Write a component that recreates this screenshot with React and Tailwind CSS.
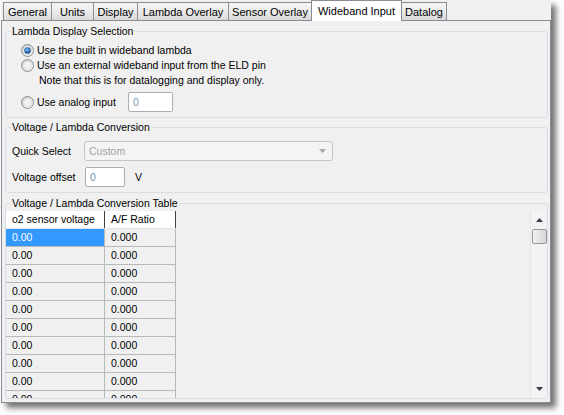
import React from 'react';

// Wideband Input tab of the settings dialog (Win7 look)

const tabs = [
  { label: 'General', w: 'w-[49px]' },
  { label: 'Units', w: 'w-[43px]' },
  { label: 'Display', w: 'w-[45px]' },
  { label: 'Lambda Overlay', w: 'w-[92px]' },
  { label: 'Sensor Overlay', w: 'w-[84px]' },
  { label: 'Wideband Input', w: 'w-[91px]', active: true },
  { label: 'Datalog', w: 'w-[46px]' },
];

const rows = Array.from({ length: 10 }, (_, i) => i);

const Radio = ({ checked }) => (
  <svg width="13" height="13" viewBox="0 0 13 13" className="shrink-0">
    <defs>
      <linearGradient id="rbg" x1="0" y1="0" x2="1" y2="1">
        <stop offset="0" stopColor="#c9c9c9" />
        <stop offset="1" stopColor="#fbfbfb" />
      </linearGradient>
      <radialGradient id="rdot" cx="0.45" cy="0.4" r="0.6">
        <stop offset="0" stopColor="#8cc3f5" />
        <stop offset="0.6" stopColor="#2f74c4" />
        <stop offset="1" stopColor="#123f7a" />
      </radialGradient>
    </defs>
    <circle cx="6.5" cy="6.5" r="6" fill="url(#rbg)" stroke="#8e8f8f" />
    <circle cx="6.5" cy="6.5" r="4" fill="#f2f2f2" stroke="#dadada" strokeWidth="0.8" />
    {checked && <circle cx="6.5" cy="6.5" r="3.2" fill="url(#rdot)" />}
  </svg>
);

const Arrow = ({ down, color = '#3c3c48' }) => (
  <svg width="7" height="4" viewBox="0 0 7 4">
    <polygon points={down ? '0,0 7,0 3.5,4' : '3.5,0 7,4 0,4'} fill={color} />
  </svg>
);

const TextBox = ({ w, value }) => (
  <div className={`${w} h-[20px] bg-white border border-[#abadb3] rounded-[2px] pl-[4px] flex items-center text-[#7891ae]`}>
    {value}
  </div>
);

export default function App() {
  return (
    <div className="w-[564px] h-[415px] bg-white overflow-hidden font-['Liberation_Sans',Arial,sans-serif] text-[10.5px] leading-[13px] text-black">
      <div className="ml-[1px] w-[550px] h-[403px] bg-[#f0f0f0] shadow-[5px_5px_6px_rgba(0,0,0,0.55)] flex flex-col">
        {/* tab strip */}
        <div className="flex items-end h-[20px] pl-[2px]">
          {tabs.map((t, i) =>
            t.active ? (
              <div
                key={t.label}
                className={`${t.w} ${i ? '-ml-px' : ''} relative z-10 -mb-px h-[21px] bg-white border border-b-0 border-[#898c95] flex items-center justify-center text-[11px]`}
              >
                {t.label}
              </div>
            ) : (
              <div
                key={t.label}
                className={`${t.w} ${i ? '-ml-px' : ''} h-[18px] bg-linear-to-b from-[#f4f4f4] via-[#ebebeb] to-[#d8d8d8] border border-b-0 border-[#898c95] flex items-center justify-center pt-px text-[11px]`}
              >
                {t.label}
              </div>
            )
          )}
        </div>

        {/* tab page */}
        <div className="h-[383px] border border-[#898c95] flex flex-col">
          <fieldset className="mt-[4px] ml-[3px] mr-[2px] h-[93px] border border-[#d5dfe5] rounded-[3px]">
            <legend className="ml-[5px] px-[1px] leading-[13px]">Lambda Display Selection</legend>
            <div className="mt-[5px] pl-[15px] flex items-center gap-[3px] h-[15px]">
              <Radio checked />
              <span>Use the built in wideband lambda</span>
            </div>
            <div className="pl-[15px] flex items-center gap-[3px] h-[15px]">
              <Radio />
              <span>Use an external wideband input from the ELD pin</span>
            </div>
            <div className="pl-[33px] h-[15px] leading-[15px]">Note that this is for datalogging and display only.</div>
            <div className="mt-[4px] pl-[15px] flex items-center h-[20px]">
              <Radio />
              <span className="ml-[3px] w-[91px]">Use analog input</span>
              <TextBox w="w-[45px]" value="0" />
            </div>
          </fieldset>

          <fieldset className="mt-[3px] ml-[3px] mr-[2px] h-[72px] border border-[#d5dfe5] rounded-[3px]">
            <legend className="ml-[5px] px-[1px] leading-[13px]">Voltage / Lambda Conversion</legend>
            <div className="mt-[7px] pl-[6px] flex items-center h-[20px]">
              <span className="w-[72px]">Quick Select</span>
              <div className="w-[249px] h-[20px] border border-[#c5c5c5] rounded-[3px] bg-[#f4f4f4] flex items-center justify-between pl-[4px] pr-[6px] text-[#a3a3a3]">
                <span>Custom</span>
                <Arrow down color="#a8a8a8" />
              </div>
            </div>
            <div className="mt-[6px] pl-[6px] flex items-center h-[20px]">
              <span className="w-[73px]">Voltage offset</span>
              <TextBox w="w-[40px]" value="0" />
              <span className="ml-[10px]">V</span>
            </div>
          </fieldset>

          <fieldset className="mt-[4px] ml-[3px] mr-[2px] h-[202px] border border-[#d5dfe5] rounded-[3px]">
            <legend className="ml-[5px] px-[1px] leading-[13px]">Voltage / Lambda Conversion Table</legend>
            <div className="mt-[1px] h-[187px] flex overflow-hidden">
              <div className="w-[170px] flex flex-col">
                <div className="flex h-[18px] shrink-0 bg-white border-b border-[#e3e3e3]">
                  <div className="w-[99px] border-r border-[#404040] pl-[6px] flex items-center">o2 sensor voltage</div>
                  <div className="w-[71px] border-r border-[#404040] pl-[6px] flex items-center">A/F Ratio</div>
                </div>
                {rows.map((i) => (
                  <div key={i} className="flex h-[18px] shrink-0">
                    <div
                      className={`w-[99px] border-r border-b border-[#b9b9b9] pl-[6px] flex items-center ${
                        i === 0 ? 'bg-[#3399ff] text-white' : ''
                      }`}
                    >
                      0.00
                    </div>
                    <div className="w-[71px] border-r border-b border-[#b9b9b9] pl-[6px] flex items-center">0.000</div>
                  </div>
                ))}
              </div>
              <div className="flex-1" />
              <div className="w-[17px] bg-[#f3f3f3] border-l border-[#e6e6e6] flex flex-col items-center">
                <div className="h-[18px] flex items-center justify-center">
                  <Arrow />
                </div>
                <div className="w-[15px] h-[15px] rounded-[2px] border border-[#979797] bg-linear-to-r from-[#f2f2f2] to-[#d6d6d6]" />
                <div className="flex-1" />
                <div className="h-[18px] flex items-center justify-center">
                  <Arrow down />
                </div>
              </div>
            </div>
          </fieldset>
        </div>
      </div>
    </div>
  );
}
